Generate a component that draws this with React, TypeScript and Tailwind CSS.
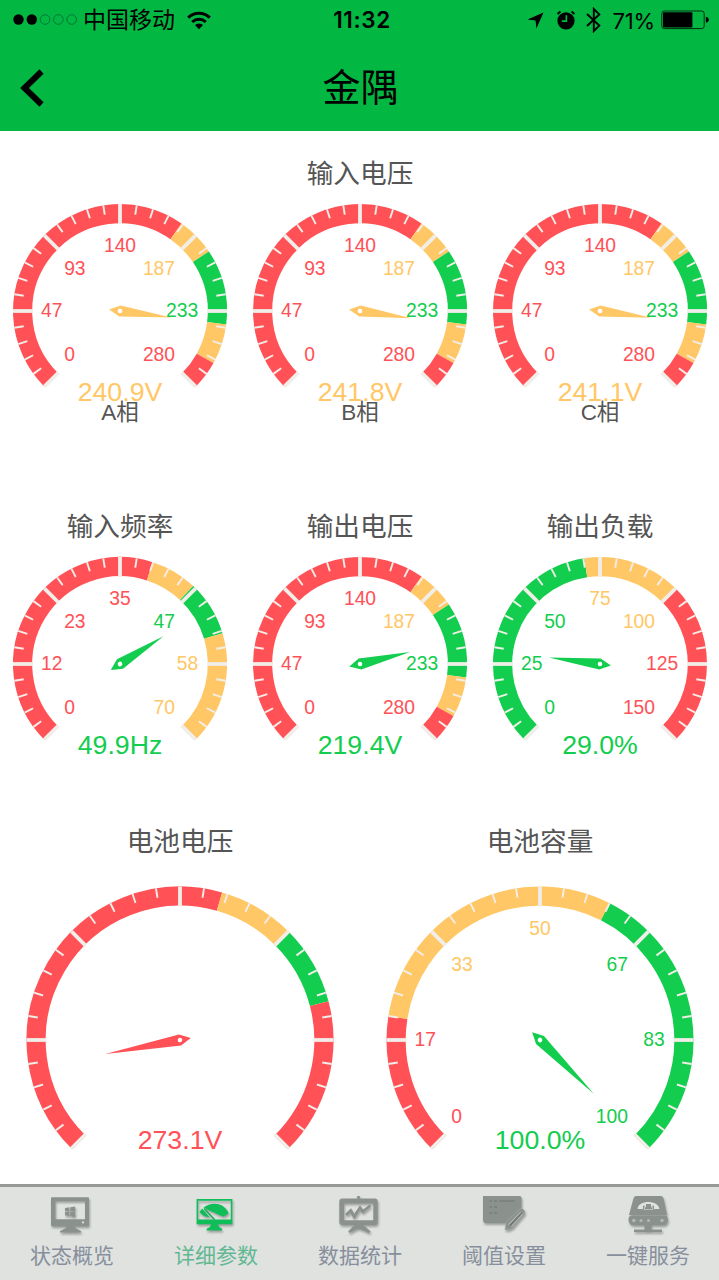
import type { ReactNode } from "react";

const RED = "#ff5156";
const YELLOW = "#ffc765";
const GREEN = "#13cd4e";
const TICK = "#f1eeea";

// [end of band as a fraction of the scale, colour]
type Band = [number, string];

interface GaugeProps {
  value: number;
  max: number;
  unit: string;
  bands: Band[];
  large?: boolean;
  hideLabels?: boolean;
  /** needle position, when the scale does not start at zero */
  ratio?: number;
}

const voltageBands: Band[] = [
  [0.63, RED],
  [0.708, YELLOW],
  [0.86, GREEN],
  [0.941, YELLOW],
  [1, RED],
];

const phases = [
  { name: "A相", value: 240.9 },
  { name: "B相", value: 241.8 },
  { name: "C相", value: 241.1 },
];

function colorAt(bands: Band[], ratio: number) {
  return (bands.find(([end]) => ratio <= end) ?? bands[bands.length - 1])[1];
}

function Gauge({ value, max, unit, bands, large, hideLabels, ratio }: GaugeProps) {
  const width = large ? 360 : 240;
  const height = large ? 300 : 220;
  const cx = width / 2;
  const cy = large ? 179 : 118;
  const r = large ? 153.5 : 107;
  const thickness = 19.2;

  // the dial sweeps 270° clockwise from the lower left
  const point = (f: number, radius: number) => {
    const a = ((270 * f - 225) * Math.PI) / 180;
    return [cx + Math.cos(a) * radius, cy + Math.sin(a) * radius];
  };

  const mid = r - thickness / 2;
  const arc = (from: number, to: number) => {
    const [x1, y1] = point(from, mid);
    const [x2, y2] = point(to, mid);
    return `M${x1} ${y1}A${mid} ${mid} 0 ${to - from > 2 / 3 ? 1 : 0} 1 ${x2} ${y2}`;
  };

  const position = ratio ?? value / max;
  const needle = large ? 76 : 51.5;

  return (
    <svg width={width} height={height} viewBox={`0 0 ${width} ${height}`} className="block shrink-0">
      {bands.map(([end, color], i) => (
        <path
          key={end}
          d={arc(i === 0 ? 0 : bands[i - 1][0], end)}
          fill="none"
          stroke={color}
          strokeWidth={thickness}
        />
      ))}

      {Array.from({ length: 31 }, (_, i) => {
        const major = i % 5 === 0;
        const [x1, y1] = point(i / 30, r);
        const [x2, y2] = point(i / 30, r - (major ? 20 : 9.5));
        return (
          <line key={i} x1={x1} y1={y1} x2={x2} y2={y2} stroke={TICK} strokeWidth={major ? 3.8 : 1.9} />
        );
      })}

      {!hideLabels &&
        Array.from({ length: 7 }, (_, i) => {
          const [x, y] = point(i / 6, r - 28);
          const dx = x - cx;
          const dy = (y - cy) / r;
          const anchor = Math.abs(dx) < 5 ? "middle" : dx < 0 ? "start" : "end";
          const shift = dy < -0.3 ? 20 : dy > 0.3 ? -6 : 5.7;
          return (
            <text
              key={i}
              x={dx > 5 ? x - 0.8 : x}
              y={y + shift}
              textAnchor={anchor}
              fontSize={19.3}
              fill={colorAt(bands, i / 6)}
            >
              {Math.round((max * i) / 6)}
            </text>
          );
        })}

      <g transform={`translate(${cx} ${cy}) rotate(${270 * position - 225})`}>
        <path d={`M-11 0L0 -5.6L${needle} 0L0 5.6Z`} fill={colorAt(bands, position)} />
        <circle r={2.3} fill="#fff" />
      </g>

      <text
        x={cx}
        y={cy + (large ? 109 : 90)}
        textAnchor="middle"
        fontSize={26.7}
        fill={colorAt(bands, position)}
      >
        {value.toFixed(1)}
        {unit}
      </text>
    </svg>
  );
}

function GaugeTitle({ children }: { children: ReactNode }) {
  return (
    <h2 className="flex h-10 items-center justify-center pt-[2px] text-[26.7px] leading-none text-[#555]">
      {children}
    </h2>
  );
}

function StatusBar() {
  return (
    <div className="flex h-10 items-center">
      <div className="flex flex-1 items-center pl-[13px]">
        <svg width="66" height="12" viewBox="0 0 66 12">
          {[0, 1, 2, 3, 4].map((i) => (
            <circle
              key={i}
              cx={5.5 + i * 13.3}
              cy={5.5}
              r={i < 2 ? 5.2 : 4.8}
              fill={i < 2 ? "#000" : "none"}
              stroke={i < 2 ? "none" : "#063"}
              strokeWidth={0.8}
            />
          ))}
        </svg>
        <span className="ml-1 pt-px text-[23px] leading-none">中国移动</span>
        <svg width="24" height="19" viewBox="0 0 24 19" className="ml-3" fill="none" stroke="#000" strokeWidth={3}>
          <path d="M1.2 6.6a15.6 15.6 0 0 1 21.6 0" />
          <path d="M5.2 11a10 10 0 0 1 13.6 0" />
          <path d="M12 18.2L7.9 14a6 6 0 0 1 8.2 0Z" fill="#000" stroke="none" />
        </svg>
      </div>
      <span className="pl-[2px] font-[Inter] text-[22.5px] font-semibold leading-none tracking-[0.6px]">11:32</span>
      <div className="flex flex-1 items-center justify-end pr-[11px]">
        <svg width="17" height="17" viewBox="0 0 17 17">
          <path d="M16.5 0.5L9.4 16.5L8.6 8.6L0.5 7.6Z" />
        </svg>
        <svg width="20" height="20" viewBox="0 0 20 20" className="ml-3">
          <circle cx="10" cy="10.8" r="8.6" />
          <path d="M1.6 4L4.4 1.6M18.4 4L15.6 1.6" stroke="#000" strokeWidth={2} />
          <path d="M10.4 5.2v6H5.8" fill="none" stroke="#02b843" strokeWidth={1.7} />
        </svg>
        <svg width="15" height="26" viewBox="0 0 15 26" className="ml-[10px]" fill="none" stroke="#000" strokeWidth={1.9}>
          <path d="M1 7L13.3 18.6L7.8 24V2L13.3 7.4L1 19" />
        </svg>
        <span className="ml-3 pt-px font-[Inter] text-[22px] leading-none tracking-[-0.2px]">71%</span>
        <svg width="48" height="20" viewBox="0 0 48 20" className="ml-[6px]">
          <rect x="0.8" y="1" width="42.4" height="17.6" rx="2.5" fill="none" stroke="#042c13" strokeWidth={1} />
          <rect x="2" y="2.2" width="29.4" height="15.2" rx="1" />
          <path d="M44.8 6.8q3 0.6 3 3t-3 3Z" />
        </svg>
      </div>
    </div>
  );
}

const tabs = [
  {
    name: "状态概览",
    icon: (
      <>
        <path
          fillRule="evenodd"
          d="M2 2.3h36a1 1 0 0 1 1 1v27a1 1 0 0 1-1 1H2a1 1 0 0 1-1-1v-27a1 1 0 0 1 1-1ZM5.3 6v18.3H35V6Z"
        />
        <path d="M16 31h9v2l6 3v1.4H10V36l6-3Z" />
        <path d="M15 13l4.4-.7v4H15ZM20.2 12.2l5-.8v4.9h-5ZM15 17.1h4.4V21L15 20.2ZM20.2 17.1h5V22l-5-.8Z" />
        <circle cx="33" cy="27.4" r="1.1" fill="#dfe2df" />
      </>
    ),
  },
  {
    name: "详细参数",
    active: true,
    icon: (
      <>
        <path fillRule="evenodd" d="M2.6 4h35.8v25.3H2.6ZM4.2 5.8v18.6h32.6V5.8Z" />
        <path d="M17 29h7l1 3 3 1.8v1.8H12.6v-1.8L16 32Z" />
        <path d="M9.6 12.6C17 6.4 30.5 7.4 34.6 18.4L29.6 21.4C25 20.6 22 17.6 17.6 16.4C14.8 15.4 12.4 14.4 9.6 12.6Z" />
        <path d="M5.4 17l2.8-3.4 7.6 8.8C11.5 22 7.5 20 5.4 17Z" />
        <path d="M10 13.5l10.5 11" stroke="#00b44c" strokeWidth={1.2} />
      </>
    ),
  },
  {
    name: "数据统计",
    icon: (
      <>
        <path
          fillRule="evenodd"
          d="M4.3 3.4h32.4a3 3 0 0 1 3 3v20.6a3 3 0 0 1-3 3H4.3a3 3 0 0 1-3-3V6.4a3 3 0 0 1 3-3ZM6 8.3v16.9h29.3V8.3Z"
        />
        <circle cx="20.5" cy="2.4" r="1.7" />
        <path d="M17 29.5h7.5l8 6.8-1.5 1.8-9-4h-3l-7.5 4-1.3-1.8Z" />
        <path
          d="M8 20l4.7-4.5 3.5 6 5.8-8.8 2.8 3.8 7.6-6"
          fill="none"
          stroke="#8b918c"
          strokeWidth={2.8}
        />
      </>
    ),
  },
  {
    name: "阈值设置",
    icon: (
      <>
        <path d="M1 1h36.5a2 2 0 0 1 2 2v13L28 28H4a3 3 0 0 1-3-3Z" />
        <g stroke="#6e746f" strokeWidth={1}>
          <path d="M7.5 6h2.5M12 6h3M17.5 6h15M7.5 12h2.5M12 12h3M7.5 18h2.5M12 18h3" />
        </g>
        <path
          d="M23 34.8L24 27.5L36.8 14.6Q38.6 13 40.6 14L42.4 15.6Q43.6 17.4 42.2 19.4L30.5 33Q27 35.4 23 34.8Z"
          stroke="#a9aea9"
          strokeWidth={0.6}
        />
        <path d="M26.5 29.5L38.6 17M29.6 31.6L41 18.6" stroke="#c6cac6" strokeWidth={0.9} />
        <path d="M28 30.6L39.8 17.8" stroke="#6e746f" strokeWidth={1.2} />
      </>
    ),
  },
  {
    name: "一键服务",
    icon: (
      <>
        <path d="M10.5 1h24a3 3 0 0 1 3 2.3L41 20H3L7.5 3.3a3 3 0 0 1 3-2.3Z" />
        <path d="M5.5 20.8h33.800q2.600 0 2.600 3.500 0 6-5 6H8q-5.500 0-5.500-6 0-3.500 3-3.500Z" />
        <path d="M18.5 30h7v4.5h10.5v2.5H8v-2.5h10.5Z" />
        <path
          d="M11.5 14C12 4.500 32.500 4.500 33.500 14L28 14V10.800H26L27.500 14.800H17.500L19 10.800H17V14Z"
          fill="#dfe2df"
        />
        <path d="M20 9h5v2.5l2 2.8h-9l2-2.8Z" />
        <g fill="#b4bab5">
          <circle cx="7.8" cy="25.5" r="1.7" />
          <circle cx="15" cy="25.5" r="1.5" />
          <circle cx="22.5" cy="25.5" r="1.5" />
          <circle cx="36" cy="25.5" r="1.7" />
        </g>
      </>
    ),
  },
];

function TabBar() {
  return (
    <nav className="mt-auto grid h-24 shrink-0 grid-cols-5 border-t-[3px] border-[#989898] bg-[#dfe2df]">
      {tabs.map((tab) => (
        <button key={tab.name} className="flex flex-col items-center pt-2">
          <svg
            width="44"
            height="40"
            viewBox="0 0 44 40"
            fill={tab.active ? "#0fbd59" : "#8b918c"}
            className="drop-shadow-[1px_2px_1px_rgba(0,0,0,0.3)]"
          >
            {tab.icon}
          </svg>
          <span
            className={`mt-[9px] text-[21px] leading-6 ${tab.active ? "text-[#62b893]" : "text-[#878f9c]"}`}
          >
            {tab.name}
          </span>
        </button>
      ))}
    </nav>
  );
}

export default function App() {
  return (
    <div className="h-[1280px] w-[719px] overflow-hidden">
      <div className="flex h-full w-[720px] flex-col bg-white font-['Liberation_Sans','Noto_Sans_CJK_SC',sans-serif]">
        <header className="h-[130.5px] shrink-0 bg-[#02b843] text-black">
          <StatusBar />
          <div className="grid h-[90px] grid-cols-[1fr_auto_1fr] items-center pt-[6px]">
            <button className="pl-5" aria-label="返回">
              <svg width="24" height="38" viewBox="0 0 24 38" fill="none" stroke="#000" strokeWidth={6}>
                <path d="M21.5 2.5L4.5 19L21.5 35.5" />
              </svg>
            </button>
            <h1 className="pl-px text-[38px] leading-none">金隅</h1>
          </div>
        </header>

        <section className="mt-[22.5px]">
          <GaugeTitle>输入电压</GaugeTitle>
          <div className="grid grid-cols-3">
            {phases.map((phase) => (
              <div key={phase.name} className="flex flex-col items-center">
                <Gauge value={phase.value} max={280} unit="V" bands={voltageBands} />
                <p className="-mt-[14px] mb-[-1px] text-[22.5px] leading-7 text-[#555]">{phase.name}</p>
              </div>
            ))}
          </div>
        </section>

        <section className="mt-20 grid grid-cols-3">
          <div className="flex flex-col items-center">
            <GaugeTitle>输入频率</GaugeTitle>
            <Gauge
              value={49.9}
              max={70}
              unit="Hz"
              bands={[
                [0.566, RED],
                [0.66, YELLOW],
                [0.7714, GREEN],
                [1, YELLOW],
              ]}
            />
          </div>
          <div className="flex flex-col items-center">
            <GaugeTitle>输出电压</GaugeTitle>
            <Gauge value={219.4} max={280} unit="V" bands={voltageBands} />
          </div>
          <div className="flex flex-col items-center">
            <GaugeTitle>输出负载</GaugeTitle>
            <Gauge
              value={29}
              max={150}
              unit="%"
              bands={[
                [0.469, GREEN],
                [0.667, YELLOW],
                [1, RED],
              ]}
            />
          </div>
        </section>

        <section className="mt-[55px] grid grid-cols-2">
          <div className="flex flex-col items-center">
            <GaugeTitle>电池电压</GaugeTitle>
            <Gauge
              large
              hideLabels
              value={273.1}
              max={500}
              ratio={0.127}
              unit="V"
              bands={[
                [0.559, RED],
                [0.667, YELLOW],
                [0.779, GREEN],
                [1, RED],
              ]}
            />
          </div>
          <div className="flex flex-col items-center">
            <GaugeTitle>电池容量</GaugeTitle>
            <Gauge
              large
              value={100}
              max={100}
              unit="%"
              bands={[
                [0.2, RED],
                [0.6, YELLOW],
                [1, GREEN],
              ]}
            />
          </div>
        </section>

        <TabBar />
      </div>
    </div>
  );
}
